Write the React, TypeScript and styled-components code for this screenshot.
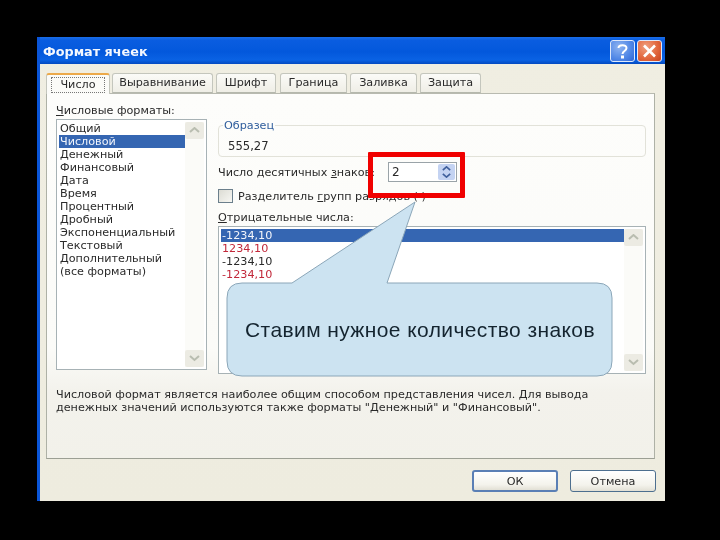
import React from 'react';
import styled, {createGlobalStyle} from 'styled-components';

const GlobalStyle = createGlobalStyle`
  html, body {margin: 0; padding: 0; background: #000;}
  * {box-sizing: border-box;}
`;

const Page = styled.div`
  position: relative;
  width: 720px;
  height: 540px;
  padding: 37px 55px 39px 37px;
  background: #000;
  overflow: hidden;
  font-family: "DejaVu Sans", sans-serif;
  font-size: 11.2px;
  color: #2a2a2a;
`;
const DialogWindow = styled.div`
  display: flex;
  flex-direction: column;
  height: 464px;
  border-left: 3px solid #0a55d8;
  background: linear-gradient(180deg, #f0eee2 0%, #eeecdf 100%);
  filter: blur(0.55px);
`;
const TitleBar = styled.div`
  display: flex;
  align-items: center;
  justify-content: space-between;
  height: 27px;
  padding: 0 3px 0 3px;
  background: linear-gradient(180deg, #1a6ee8 0%, #0a5de0 12%, #0358dc 55%, #0a62e4 85%, #0349c0 100%);
`;
const Title = styled.div`
  padding-top: 2px;
  font-weight: bold;
  font-size: 12.8px;
  color: #f4f8ff;
`;
const TitleButtons = styled.div`
  display: flex;
  gap: 2px;
`;
const TitleButton = styled.div<{$close?: boolean}>`
  display: flex;
  align-items: center;
  justify-content: center;
  width: 25px;
  height: 22px;
  border: 1px solid #dfe9fb;
  border-radius: 3px;
  background: ${p => p.$close
    ? 'radial-gradient(circle at 35% 30%, #f0a080 0%, #e2683f 55%, #c9431f 100%)'
    : 'radial-gradient(circle at 35% 30%, #8fb4f0 0%, #4f86e6 60%, #2f66d4 100%)'};
`;
const Body = styled.div`
  display: flex;
  flex-direction: column;
  flex: 1;
  padding: 9px 10px 0 6px;
`;
const TabRow = styled.div`
  display: flex;
  height: 20px;
`;
const Tab = styled.div<{$width: number; $gap: number; $active?: boolean}>`
  display: flex;
  align-items: center;
  justify-content: center;
  width: ${p => p.$width}px;
  margin-right: ${p => p.$gap}px;
  height: ${p => (p.$active ? 21 : 20)}px;
  background: ${p => (p.$active ? '#fbfbf8' : 'linear-gradient(180deg, #fbfbf8 0%, #efeee6 100%)')};
  border: 1px solid #c4c6bd;
  border-bottom: ${p => (p.$active ? 'none' : '1px solid #b5b8ad')};
  border-top: ${p => (p.$active ? '2px solid #eca94a' : '1px solid #c4c6bd')};
  border-radius: 3px 3px 0 0;
  position: relative;
  z-index: ${p => (p.$active ? 1 : 0)};
`;
const TabLabel = styled.span<{$active?: boolean}>`
  padding: 0 ${p => (p.$active ? 8 : 0)}px;
  line-height: 14px;
  border: ${p => (p.$active ? '1px dotted #777' : 'none')};
`;
const Pane = styled.div`
  display: grid;
  grid-template-columns: 151px 428px;
  column-gap: 11px;
  align-content: start;
  width: 609px;
  height: 366px;
  padding: 10px 0 0 9px;
  border: 1px solid #aeb1a6;
  border-top-color: #b8bab0;
  border-bottom-color: #9c9f94;
  background: linear-gradient(180deg, #fdfdfb 0%, #fbfbf8 70%, #f3f2ec 82%, #f2f1ea 100%);
`;
const LeftColumn = styled.div`
  display: flex;
  flex-direction: column;
`;
const RightColumn = styled.div`
  display: flex;
  flex-direction: column;
  padding-top: 15px;
`;
const Label = styled.div`
  height: 13px;
  line-height: 13px;
  white-space: nowrap;
`;
const Underlined = styled.span`
  text-decoration: underline;
`;
const ListBox = styled.div<{$height: number}>`
  display: flex;
  justify-content: space-between;
  height: ${p => p.$height}px;
  margin-top: 2px;
  padding: 2px;
  border: 1px solid #a7b2b5;
  background: #fff;
`;
const Items = styled.div`
  display: flex;
  flex-direction: column;
  flex: 1;
`;
const Item = styled.div<{$selected?: boolean; $red?: boolean}>`
  height: 13px;
  line-height: 13px;
  padding-left: 1px;
  white-space: nowrap;
  background: ${p => (p.$selected ? '#3566b2' : 'transparent')};
  color: ${p => (p.$selected ? '#f2f5fb' : p.$red ? '#c2283a' : '#2a2a2a')};
`;
const ScrollTrack = styled.div`
  display: flex;
  flex-direction: column;
  justify-content: space-between;
  width: 19px;
  background: #fbfbf8;
`;
const ScrollButton = styled.div`
  display: flex;
  align-items: center;
  justify-content: center;
  height: 17px;
  background: #ecebe3;
  border-radius: 2px;
`;
const GroupBox = styled.fieldset`
  height: 38px;
  margin: 0;
  padding: 0 0 0 9px;
  border: 1px solid #e2e2d9;
  border-radius: 4px;
  min-width: 0;
`;
const Legend = styled.legend`
  margin-left: -5px;
  padding: 0 1px;
  height: 13px;
  line-height: 14px;
  color: #2f5d9c;
`;
const SampleValue = styled.div`
  margin-top: 8px;
  font-size: 11.6px;
  line-height: 13px;
`;
const SpinRow = styled.div`
  display: flex;
  align-items: center;
  height: 20px;
  margin-top: 5px;
`;
const SpinLabel = styled(Label)`
  width: 170px;
`;
const SpinBox = styled.div`
  display: flex;
  align-items: center;
  justify-content: space-between;
  width: 69px;
  height: 20px;
  padding: 0 1px 0 3px;
  border: 1px solid #9aa3a8;
  background: #fff;
  font-size: 12px;
`;
const SpinButtons = styled.div`
  display: flex;
  flex-direction: column;
  align-items: center;
  justify-content: center;
  gap: 2px;
  width: 17px;
  height: 16px;
  background: #c4d3f2;
  border-radius: 2px;
`;
const CheckRow = styled.div`
  display: flex;
  align-items: center;
  gap: 5px;
  height: 14px;
  margin-top: 7px;
`;
const CheckBox = styled.div`
  width: 15px;
  height: 14px;
  border: 1px solid #6b7f8c;
  background: linear-gradient(135deg, #dcdcd4 0%, #f7f7f3 100%);
`;
const NegLabel = styled(Label)`
  margin-top: 8px;
`;
const Description = styled.div`
  grid-column: 1 / 3;
  margin-top: 14px;
  line-height: 13px;
  white-space: nowrap;
`;
const Footer = styled.div`
  display: flex;
  justify-content: flex-end;
  gap: 12px;
  margin-top: 11px;
  margin-right: -1px;
`;
const PushButton = styled.div<{$primary?: boolean}>`
  display: flex;
  align-items: center;
  justify-content: center;
  width: 86px;
  height: 22px;
  border: ${p => (p.$primary ? '2px solid #5a7fb5' : '1px solid #4d6f8f')};
  border-radius: 3px;
  background: linear-gradient(180deg, #ffffff 0%, #f4f3ec 70%, #e2e0d5 100%);
`;
const Highlight = styled.div`
  position: absolute;
  left: 368px;
  top: 152px;
  width: 97px;
  height: 46px;
  border: 5px solid #f00000;
  border-radius: 1px;
  filter: blur(0.4px);
`;
const Callout = styled.div`
  position: absolute;
  left: 226px;
  top: 200px;
  display: flex;
  align-items: center;
  justify-content: center;
  width: 388px;
  height: 178px;
  padding-top: 81px;
  font-family: "Liberation Sans", sans-serif;
  font-size: 21px;
  letter-spacing: 0.4px;
  color: #14242f;
  filter: blur(0.3px);
`;
const CalloutShape = styled.svg`
  position: absolute;
  left: 0;
  top: 0;
`;
const CalloutText = styled.span`
  position: relative;
`;

const formats = ['Общий', 'Числовой', 'Денежный', 'Финансовый', 'Дата', 'Время', 'Процентный', 'Дробный', 'Экспоненциальный', 'Текстовый', 'Дополнительный', '(все форматы)'];
const negatives = [
    {text: '-1234,10', selected: true},
    {text: '1234,10', red: true},
    {text: '-1234,10'},
    {text: '-1234,10', red: true},
];
const tabs = [
    {name: 'Число', width: 64, gap: 2, active: true},
    {name: 'Выравнивание', width: 101, gap: 3},
    {name: 'Шрифт', width: 60, gap: 4},
    {name: 'Граница', width: 67, gap: 3},
    {name: 'Заливка', width: 67, gap: 3},
    {name: 'Защита', width: 61, gap: 0},
];

const Chevron = ({up, color = '#b9bdb0', w = 11}: {up?: boolean; color?: string; w?: number}) => (
    <svg width={w} height={w * 0.55} viewBox="0 0 11 6" fill="none">
        <path d={up ? 'M1 5 L5.5 1 L10 5' : 'M1 1 L5.5 5 L10 1'} stroke={color} strokeWidth="2" />
    </svg>
);

const Scrollbar = () => (
    <ScrollTrack>
        <ScrollButton><Chevron up /></ScrollButton>
        <ScrollButton><Chevron /></ScrollButton>
    </ScrollTrack>
);

export default function App() {
    return (
        <Page>
            <GlobalStyle />
            <DialogWindow>
                <TitleBar>
                    <Title>Формат ячеек</Title>
                    <TitleButtons>
                        <TitleButton>
                            <svg width="13" height="16" viewBox="0 0 13 16" fill="none">
                                <path d="M2.5 5 C2.5 1.5 10.5 1 10.5 5 C10.5 8 6.5 8 6.5 11" stroke="#fff" strokeWidth="2" />
                                <rect x="5" y="12.5" width="3" height="3" fill="#fff" />
                            </svg>
                        </TitleButton>
                        <TitleButton $close>
                            <svg width="15" height="14" viewBox="0 0 15 14" fill="none">
                                <path d="M2 1.5 L13 12.5 M13 1.5 L2 12.5" stroke="#fff" strokeWidth="2.6" />
                            </svg>
                        </TitleButton>
                    </TitleButtons>
                </TitleBar>
                <Body>
                    <TabRow>
                        {tabs.map(tab => (
                            <Tab key={tab.name} $width={tab.width} $gap={tab.gap} $active={tab.active}>
                                <TabLabel $active={tab.active}>{tab.name}</TabLabel>
                            </Tab>
                        ))}
                    </TabRow>
                    <Pane>
                        <LeftColumn>
                            <Label><Underlined>Ч</Underlined>исловые форматы:</Label>
                            <ListBox $height={251}>
                                <Items>
                                    {formats.map((format, i) => (
                                        <Item key={format} $selected={i === 1}>{format}</Item>
                                    ))}
                                </Items>
                                <Scrollbar />
                            </ListBox>
                        </LeftColumn>
                        <RightColumn>
                            <GroupBox>
                                <Legend>Образец</Legend>
                                <SampleValue>555,27</SampleValue>
                            </GroupBox>
                            <SpinRow>
                                <SpinLabel>Число десятичных <Underlined>з</Underlined>наков:</SpinLabel>
                                <SpinBox>
                                    2
                                    <SpinButtons>
                                        <Chevron up color="#3f5f9c" w={9} />
                                        <Chevron color="#3f5f9c" w={9} />
                                    </SpinButtons>
                                </SpinBox>
                            </SpinRow>
                            <CheckRow>
                                <CheckBox />
                                <Label>Разделитель <Underlined>г</Underlined>рупп разрядов ( )</Label>
                            </CheckRow>
                            <NegLabel><Underlined>О</Underlined>трицательные числа:</NegLabel>
                            <ListBox $height={148}>
                                <Items>
                                    {negatives.map((item, i) => (
                                        <Item key={i} $selected={item.selected} $red={item.red}>{item.text}</Item>
                                    ))}
                                </Items>
                                <Scrollbar />
                            </ListBox>
                        </RightColumn>
                        <Description>
                            Числовой формат является наиболее общим способом представления чисел. Для вывода<br />
                            денежных значений используются также форматы "Денежный" и "Финансовый".
                        </Description>
                    </Pane>
                    <Footer>
                        <PushButton $primary>ОК</PushButton>
                        <PushButton>Отмена</PushButton>
                    </Footer>
                </Body>
            </DialogWindow>
            <Highlight />
            <Callout>
                <CalloutShape width="388" height="178" viewBox="0 0 388 178">
                    <path
                        d="M16 83 H66 L189 2 L161 83 H371 Q386 83 386 98 V161 Q386 176 371 176 H16 Q1 176 1 161 V98 Q1 83 16 83 Z"
                        fill="#cce3f1"
                        stroke="#8ba6b8"
                        strokeWidth="1"
                    />
                </CalloutShape>
                <CalloutText>Ставим нужное количество знаков</CalloutText>
            </Callout>
        </Page>
    );
}
